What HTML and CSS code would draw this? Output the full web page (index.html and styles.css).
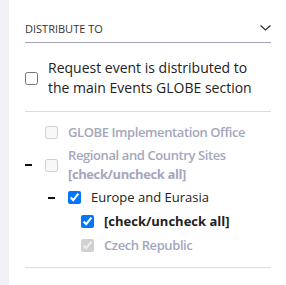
FILE: index.html
```html
<!DOCTYPE html>
<html lang="en">

<head>
    <meta charset="UTF-8">
    <meta name="viewport" content="width=device-width, initial-scale=1.0">
    <title>Distribute To</title>
    <link rel="stylesheet" href="styles.css">
</head>

<body>
    <div class="page">
        <div class="rail"></div>

        <div class="panel">
            <div class="section-head">
                <span class="section-title">Distribute to</span>
                <svg class="chevron" width="11" height="6" viewBox="0 0 11 6">
                    <path d="M0.5 0.5 L5.5 5 L10.5 0.5" fill="none" stroke="#333" stroke-width="1.3"/>
                </svg>
            </div>

            <label class="main-option">
                <input type="checkbox">
                <span>Request event is distributed to the main Events GLOBE section</span>
            </label>

            <ul class="tree">
                <li>
                    <div class="node">
                        <span class="toggle"></span>
                        <input type="checkbox" disabled>
                        <span class="label muted">GLOBE Implementation Office</span>
                    </div>
                </li>
                <li>
                    <div class="node">
                        <span class="toggle"><span class="dash"></span></span>
                        <input type="checkbox" disabled>
                        <span class="label muted">Regional and Country Sites<br><b>[check/uncheck all]</b></span>
                    </div>
                    <ul class="level-1">
                        <li>
                            <div class="node">
                                <span class="toggle"><span class="dash"></span></span>
                                <input type="checkbox" checked>
                                <span class="label">Europe and Eurasia</span>
                            </div>
                            <ul class="level-2">
                                <li>
                                    <div class="node">
                                        <span class="toggle"></span>
                                        <input type="checkbox" checked>
                                        <span class="label"><b>[check/uncheck all]</b></span>
                                    </div>
                                </li>
                                <li>
                                    <div class="node">
                                        <span class="toggle"></span>
                                        <input type="checkbox" checked disabled>
                                        <span class="label muted">Czech Republic</span>
                                    </div>
                                </li>
                            </ul>
                        </li>
                    </ul>
                </li>
            </ul>
        </div>
    </div>
</body>

</html>
```

FILE: styles.css
```css
/* Distribution panel */
body {
    margin: 0;
    font-family: "Open Sans", "Noto Sans", sans-serif;
    font-size: 13px;
    color: #222;
    background-color: #fff;
}

.page {
    display: flex;
    min-height: 285px;
}

.rail {
    width: 9px;
    background-color: #f1f1f7;
}

.panel {
    flex: 1;
    padding: 18px 15px 0 16px;
}

.section-head {
    display: flex;
    align-items: center;
    justify-content: space-between;
    height: 24px;
    border-bottom: 1px solid #a3a5bf;
}

.section-title {
    font-size: 11px;
    text-transform: uppercase;
    color: #333;
    line-height: 16px;
    margin-top: -3px;
}

.chevron {
    margin-top: -4px;
}

.main-option {
    display: flex;
    align-items: center;
    padding: 15px 0 13px;
    border-bottom: 1px solid #dcdcdc;
    font-size: 14px;
    line-height: 20px;
}

.main-option input {
    margin: 0 10px 0 0;
    width: 13px;
    height: 13px;
    flex-shrink: 0;
}

.main-option span {
    max-width: 214px;
}

.tree,
.tree ul {
    list-style: none;
    margin: 0;
    padding: 0;
}

.tree {
    padding: 9px 0 10px;
    border-bottom: 1px solid #dcdcdc;
}

.tree .level-1 {
    padding-left: 23px;
}

.tree .level-2 {
    padding-left: 13px;
}

.node {
    display: flex;
    align-items: center;
    padding: 2px 0;
    line-height: 19px;
}

.node .label.muted b {
    line-height: 18px;
}

.level-2 .node {
    padding: 2.5px 0;
}

.toggle {
    width: 20px;
    flex-shrink: 0;
    display: flex;
    align-items: center;
}

.dash {
    width: 7px;
    height: 2px;
    background-color: #111;
}

.node input {
    margin: 0 10px 0 0;
    width: 13px;
    height: 13px;
    flex-shrink: 0;
}

.label.muted {
    color: #a4a7bc;
    font-weight: 600;
    letter-spacing: -0.4px;
}

.label b {
    font-weight: 700;
}
```
